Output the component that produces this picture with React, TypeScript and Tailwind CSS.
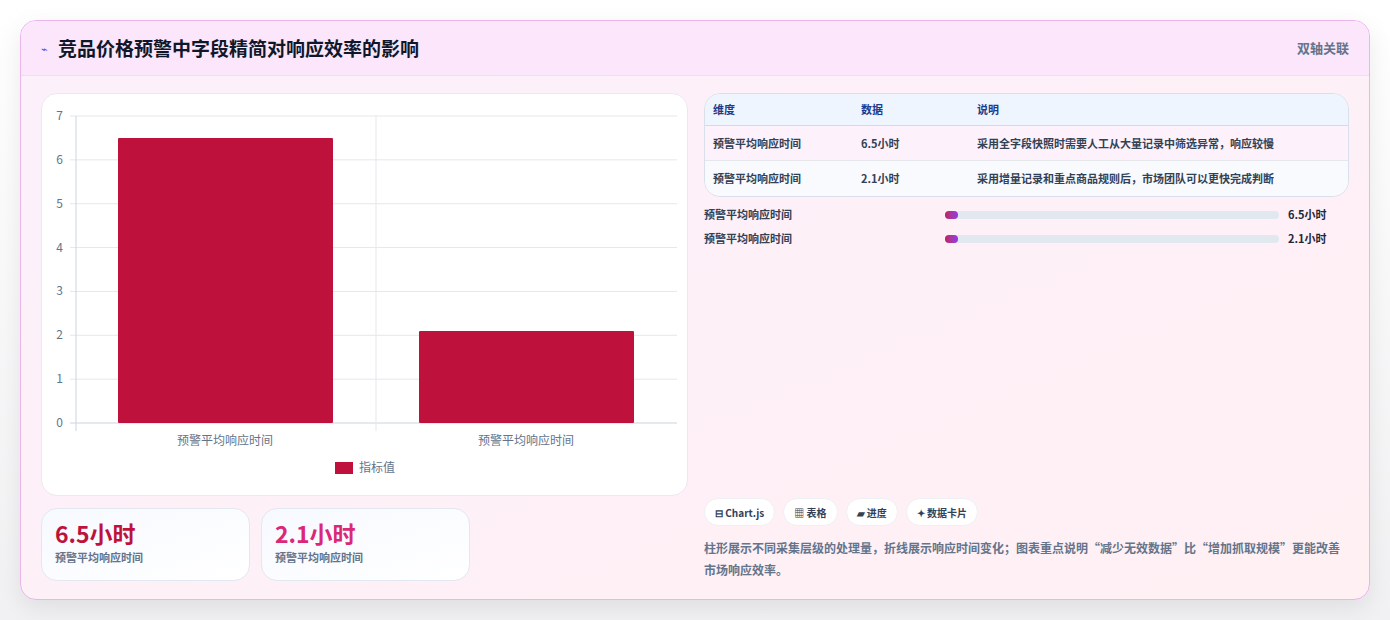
const FONT = { fontFamily: '"Noto Sans CJK SC", "Noto Sans", sans-serif' };

const rows = [
  { name: '预警平均响应时间', value: '6.5小时', note: '采用全字段快照时需要人工从大量记录中筛选异常，响应较慢' },
  { name: '预警平均响应时间', value: '2.1小时', note: '采用增量记录和重点商品规则后，市场团队可以更快完成判断' },
];

function Chart() {
  const x0 = 34, x1 = 635, yTop = 22, yBot = 329;
  const unit = (yBot - yTop) / 7;
  const bars = [6.5, 2.1];
  return (
    <svg width="647" height="402" className="block">
      {[0, 1, 2, 3, 4, 5, 6, 7].map((v) => {
        const y = yBot - v * unit;
        return (
          <g key={v}>
            <line x1={x0 - 6} x2={x1} y1={y} y2={y} stroke={v === 0 ? '#cbd5e1' : '#e5e7eb'} />
            <text x={21} y={y + 4} fontSize="12" fill="#64748b" textAnchor="end">{v}</text>
          </g>
        );
      })}
      <line x1={x0} x2={x0} y1={yTop} y2={yBot + 8} stroke="#cbd5e1" />
      <line x1={334} x2={334} y1={yTop} y2={yBot + 8} stroke="#e5e7eb" />
      {bars.map((b, i) => {
        const bx = 76 + i * 301;
        return (
          <g key={i}>
            <rect x={bx} y={yBot - b * unit} width={215} height={b * unit} fill="#be123c" rx="1" />
            <text x={bx + 107} y={351} fontSize="12" fill="#64748b" textAnchor="middle">预警平均响应时间</text>
          </g>
        );
      })}
      <rect x={293} y={368} width={18} height={12} fill="#be123c" />
      <text x={317} y={378} fontSize="12" fill="#64748b">指标值</text>
    </svg>
  );
}

export default function App() {
  return (
    <div className="w-[1390px] h-[620px] bg-gradient-to-b from-white to-[#f1f1f3] pt-5 px-5" style={FONT}>
      <div className="w-[1350px] h-[580px] rounded-2xl border border-[#e9b5ea] bg-gradient-to-br from-[#fcf0fc] to-[#fff0f3] shadow-[0_8px_24px_rgba(0,0,0,0.08)] overflow-hidden flex flex-col">
        <div className="h-[55px] shrink-0 flex items-center justify-between px-5 bg-[#fbe6fb] border-b border-[#f3dcf3]">
          <div className="flex items-center gap-2.5">
            <span className="text-[11px] text-[#4f46e5]">⌁</span>
            <h1 className="text-[19px] font-bold text-[#0f172a]">竞品价格预警中字段精简对响应效率的影响</h1>
          </div>
          <span className="text-[13px] font-semibold text-[#64748b]">双轴关联</span>
        </div>
        <div className="flex gap-4 px-5 pt-[17px]">
          <div className="w-[647px] flex flex-col gap-3">
            <div className="h-[403px] bg-white rounded-2xl border border-[#ede7f0]">
              <Chart />
            </div>
            <div className="flex gap-[11px]">
              {[
                { v: '6.5小时', c: 'text-[#be123c]' },
                { v: '2.1小时', c: 'text-[#db2777]' },
              ].map((s, i) => (
                <div key={i} className="w-[209px] h-[73px] rounded-2xl border border-[#e2e8f0] bg-gradient-to-br from-[#f6f9ff] to-white px-[13px] pt-2.5">
                  <div className={`text-[23px] leading-7 font-bold ${s.c}`}>{s.v}</div>
                  <div className="text-[11px] font-semibold text-[#64748b] mt-0.5">预警平均响应时间</div>
                </div>
              ))}
            </div>
          </div>
          <div className="w-[648px] flex flex-col">
            <div className="rounded-2xl border border-[#d9e0ea] overflow-hidden text-[11px] font-semibold">
              <div className="h-8 flex items-center bg-[#eef5ff] border-b border-[#cfdcec] text-[#1e3a8a]">
                <div className="w-[156px] pl-2">维度</div>
                <div className="w-[116px]">数据</div>
                <div>说明</div>
              </div>
              {rows.map((r, i) => (
                <div key={i} className={`h-[35px] flex items-center text-[#334155] ${i === 0 ? 'bg-[#fdf2fb] border-b border-[#e5e7eb]' : 'bg-[#f8fafd]'}`}>
                  <div className="w-[156px] pl-2">{r.name}</div>
                  <div className="w-[116px]">{r.value}</div>
                  <div>{r.note}</div>
                </div>
              ))}
            </div>
            <div className="mt-2.5 flex flex-col gap-[9px]">
              {rows.map((r, i) => (
                <div key={i} className="flex items-center h-[15px] text-[11px] font-semibold text-[#334155]">
                  <div className="w-[241px]">{r.name}</div>
                  <div className="w-[334px] h-2 rounded-full bg-[#e2e8f0]">
                    <div className="h-2 w-[13px] rounded-full bg-gradient-to-r from-[#be185d] to-[#9333ea]" />
                  </div>
                  <div className="ml-[9px] text-[#1e293b]">{r.value}</div>
                </div>
              ))}
            </div>
            <div className="flex-1" />
            <div className="flex gap-2 mt-[250px]">
              {['⊟ Chart.js', '▦ 表格', '▰ 进度', '✦ 数据卡片'].map((t) => (
                <span key={t} className="h-[28px] px-2.5 flex items-center rounded-full bg-white border border-[#eef0f4] text-[10px] font-bold text-[#334155]">{t}</span>
              ))}
            </div>
            <p className="mt-[11px] text-[12px] leading-[22px] font-semibold text-[#64748b]">
              柱形展示不同采集层级的处理量，折线展示响应时间变化；图表重点说明“减少无效数据”比“增加抓取规模”更能改善市场响应效率。
            </p>
          </div>
        </div>
      </div>
    </div>
  );
}
